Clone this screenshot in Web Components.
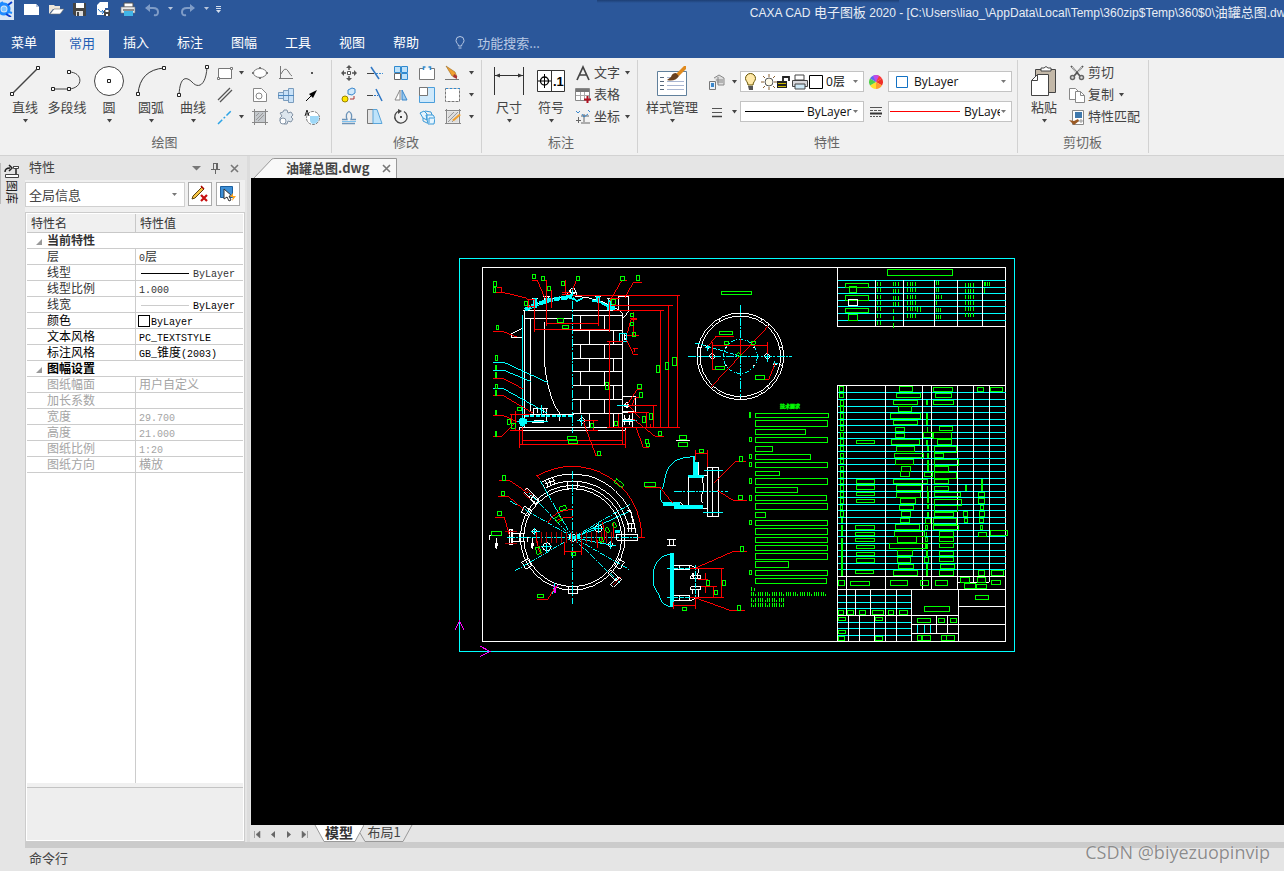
<!DOCTYPE html>
<html lang="zh-CN">
<head>
<meta charset="utf-8">
<title>CAXA CAD 电子图板 2020</title>
<style>
html, body { margin: 0; height: 100%; }
body { font: 13px/16px "Noto Sans CJK SC", "Open Sans", sans-serif; color: #444; background: #e5e5e5; overflow: hidden; }
</style>
</head>
<body>
<cad-app></cad-app>
<script>
const define = (name, html, setup) => {
  const tpl = document.createElement('template');
  tpl.innerHTML = html;
  customElements.define(name, class extends HTMLElement {
    connectedCallback() {
      if (this.shadowRoot) return;
      const root = this.attachShadow({ mode: 'open' });
      root.append(tpl.content.cloneNode(true));
      if (setup) setup(this, root);
    }
  });
};

/* ---------- icons: [width, height, markup] ---------- */
const node = (x, y) => `<path d="M${x - 1.5} ${y - 1.5}h3v3h-3z" fill="#fff" stroke="#222"/>`;
const ICONS = {
  caret: [7, 4, '<path d="M1 0h5L3.500 3.500z" fill="#444"/>'],
  caretGray: [7, 4, '<path d="M1 0h5L3.500 3z" fill="#777"/>'],
  caretLight: [7, 4, '<path d="M1 0h5L3.500 3z" fill="#b9c6dc"/>'],
  logo: [14, 16, '<circle cx="4" cy="8" r="5" fill="none" stroke="#1f8bff" stroke-width="3"/><path d="M6 13l5 3M8 4l4-3" stroke="#0a3fd0" stroke-width="2"/><path d="M0 3l3-2M9 11l3 1" stroke="#1f8bff" stroke-width="2"/><circle cx="4" cy="8" r="2.500" fill="#7cc4ff"/>'],
  newDoc: [16, 16, '<path d="M0 3h12l3 3v8H0z" fill="#fff"/><path d="M12 3v3h3z" fill="#b9c6dc"/>'],
  open: [16, 16, '<path d="M1 13V4h5l1 1h5v3H5z" fill="#ede6da"/><path d="M2 13l4-5h10l-4 5z" fill="#fff" stroke="#6c6c6c" stroke-width=".6"/>'],
  save: [16, 16, '<path d="M1 2h13v13H3l-2-2z" fill="#444"/><path d="M4 2h8v5H4z" fill="#fff"/><path d="M4 10h7v5H4z" fill="#ddd"/><path d="M5 11h2v4H5z" fill="#444"/>'],
  saveAs: [16, 16, '<path d="M4 1h8v6H9v7H1V4z" fill="#fff"/><path d="M2 8q2 4 6 3M6 9l2 2-2 2" fill="none" stroke="#2b77c8"/><path d="M8 9h6v6H8z" fill="#444"/><path d="M9.500 9h3v2h-3zM10 13h2v2h-2z" fill="#fff"/>'],
  print: [16, 16, '<path d="M4 2h9v4H4z" fill="#fff" stroke="#555"/><path d="M1 6h14v6H1z" fill="#e8e8e8" stroke="#777" stroke-width=".6"/><path d="M4 10h9v5H4z" fill="#41b5e8"/><path d="M3 9h11" stroke="#333"/>'],
  undo: [16, 16, '<path d="M2 7h7q5 0 5 4t-4 3" fill="none" stroke="#7f9cc7" stroke-width="2"/><path d="M1 7l5-4v8z" fill="#7f9cc7"/>'],
  redo: [16, 16, '<path d="M14 7H7q-5 0-5 4t4 3" fill="none" stroke="#7f9cc7" stroke-width="2"/><path d="M15 7l-5-4v8z" fill="#7f9cc7"/>'],
  more: [7, 8, '<path d="M1 1.500h5M1 3.500h5" stroke="#d5dfee"/><path d="M1 5h5L3.500 8z" fill="#d5dfee"/>'],
  bulbOff: [10, 14, '<path d="M3.500 10C3.500 8 1 7 1 4.500a4 4 0 0 1 8 0C9 7 6.500 8 6.500 10zM3.500 12h3" fill="none" stroke="#b9c9e4"/>'],
  line: [32, 32, '<path d="M3 29L29 3" stroke="#444" stroke-width="1.500"/>' + node(3, 29) + node(29, 3)],
  poly: [32, 32, '<path d="M2 24H18C33 23 32 7 18 7" fill="none" stroke="#444"/>' + node(2, 24) + node(18, 24) + node(18, 7)],
  circle: [32, 32, '<circle cx="16" cy="16" r="14.500" fill="#fff" stroke="#444"/>' + node(16, 16)],
  arc: [32, 32, '<path d="M3 29Q5 5 29 3" fill="none" stroke="#333"/>' + node(3, 29) + node(29, 3)],
  curve: [32, 32, '<path d="M2 30C3 10 10 12 15 17C21 24 29 21 30 2" fill="none" stroke="#444"/>' + node(2, 30) + node(30, 2)],
  rect: [16, 16, '<path d="M1.500 3.500h13v10h-13z" fill="#fff" stroke="#777"/><path d="M.5 12.500h2v2h-2zM13.500 2.500h2v2h-2z" fill="#fff" stroke="#777"/>'],
  ellipse: [16, 16, '<ellipse cx="8" cy="8" rx="6.500" ry="4.500" fill="#fff" stroke="#777"/><path d="M0 7h2v2H0zM14 7h2v2h-2zM7 2h2v2H7zM7 12h2v2H7z" fill="#777"/>'],
  graph: [16, 16, '<path d="M2.500 1v13M1 13.500h14M3 9Q7 1 10 6T14 11" fill="none" stroke="#777"/>'],
  point: [16, 16, '<path d="M7 7h2v2H7z" fill="#555"/>'],
  parallel: [16, 16, '<path d="M1 13L13 1M3 15L15 3" stroke="#555" stroke-width="1.300"/>'],
  contour: [16, 16, '<path d="M1.500 1.500h8l5 5v8h-13z" fill="#fff" stroke="#888"/><circle cx="7" cy="9" r="3" fill="none" stroke="#888"/>'],
  shaft: [16, 16, '<path d="M.5 5.500h5v6h-5zM5.500 3.500h5v10h-5zM10.500 1.500h5v14h-5z" fill="#c9e2f8" stroke="#7a9cbd"/><path d="M0 8.500h16" stroke="#4b87c0"/>'],
  arrow: [16, 16, '<path d="M2 14l7-7" stroke="#000"/><path d="M13 3L5 7l4 4z" fill="#000"/>'],
  center: [16, 16, '<path d="M1 15L15 1" stroke="#2ca3e6" stroke-width="1.500" stroke-dasharray="6 2 2 2"/>'],
  hatch: [16, 16, '<path d="M3 3h10v10H3z" fill="#c4c8cc"/><path d="M2.500 0v16M13.500 0v16M0 2.500h16M0 13.500h16" stroke="#888"/><path d="M4 7l3-3M4 11l7-7M6 12l6-6" stroke="#999"/>'],
  gear: [16, 16, '<path d="M6 1h3l1 3 3-1 2 3-2 2 2 2-2 3-3-1-1 3H6v-3H2V9l2-2-2-3 3-1z" fill="#dde6ee" stroke="#8494a6"/><circle cx="5" cy="12" r="3" fill="#fff" stroke="#8494a6"/>'],
  textCircle: [16, 16, '<circle cx="9" cy="9" r="6.500" fill="#fff" stroke="#777" stroke-dasharray="3 1"/><path d="M6 7h9q0 8-6 8q-3-1-3-4z" fill="#9fd8f7"/><path d="M1 7l2-6 2 6M2 5h3" fill="none" stroke="#222"/>'],
  move: [16, 16, '<path d="M8 2v3M8 11v3M2 8h3M11 8h3" stroke="#555" stroke-width="1.500"/><path d="M8 0l3 3H5zM8 16l3-3H5zM0 8l3-3v6zM16 8l-3-3v6z" fill="#555"/><path d="M6.500 6.500h3v3h-3z" fill="#fff" stroke="#555"/>'],
  trim: [16, 16, '<path d="M0 8.500h7" stroke="#444"/><path d="M9 8.500h7" stroke="#3f8fd4" stroke-dasharray="2 1"/><path d="M4 2l8 12" stroke="#2f77c4" stroke-width="1.500"/>'],
  array: [16, 16, '<path d="M1.500 1.500h6v6h-6zM8.500 1.500h6v6h-6zM8.500 8.500h6v6h-6z" fill="#bfe1f8" stroke="#2f8ad0"/><path d="M1.500 8.500h6v6h-6z" fill="#fff" stroke="#666"/>'],
  breakAt: [16, 16, '<path d="M5 3.500H.5v11h15v-11H11" fill="#fff" stroke="#777"/><path d="M4.500 5V2h2M11.500 5V2h-2" fill="none" stroke="#2f8ad0" stroke-width="1.500"/>'],
  erase: [16, 16, '<path d="M1 1l9 6 2 5-5-1z" fill="#f0a030" stroke="#9a6a20" stroke-width=".6"/><path d="M9 9l3 2v3l-4-2z" fill="#a33"/><path d="M0 14.500h14" stroke="#777"/>'],
  copy2: [16, 16, '<circle cx="4" cy="12" r="3" fill="#ffe600" stroke="#998200"/><path d="M7 3l4-2 3 1v4l-3 2-4-1z" fill="#cfe8fb" stroke="#3a87cc"/><path d="M9 12h4V9" fill="none" stroke="#a33"/>'],
  extend: [16, 16, '<path d="M0 8.500h6" stroke="#444"/><path d="M7 8.500h4" stroke="#2f77c4" stroke-dasharray="2 1"/><path d="M9 2l6 12" stroke="#2f77c4" stroke-width="1.500"/>'],
  mirror: [16, 16, '<path d="M7 3v10H2z" fill="#fff" stroke="#888"/><path d="M9 3v10h5z" fill="#9dcbee" stroke="#3a87cc"/>'],
  scale: [16, 16, '<path d="M.5 .5h15v15H.5z" fill="#cfe9fb" stroke="#4a9edb"/><path d="M.5 .5h8v8h-8z" fill="#fff" stroke="#777"/>'],
  stretch: [16, 16, '<path d="M.5 1.500h14v13H.5z" fill="#fff" stroke="#777" stroke-dasharray="3 1"/><path d="M1 1.500h14" stroke="#2f8ad0" stroke-dasharray="2 2"/>'],
  offset: [16, 16, '<path d="M1 10.500h5q-2-6 2-8q4 2 2 8h5M1 14.500h13" fill="none" stroke="#6b93b8" stroke-width="1.300"/><path d="M1 12.500h14" stroke="#7cc0ee"/>'],
  shear: [16, 16, '<path d="M.5 .5h9v14h-9z" fill="#e4e4e4" stroke="#777"/><path d="M6 .5h4l5 14H6z" fill="#bfe3fa" stroke="#5aa5da"/>'],
  rotate: [16, 16, '<path d="M11 2.500A6.200 6.200 0 1 1 6 2" fill="none" stroke="#444" stroke-width="1.300"/><path d="M5 0l4 2-4 3z" fill="#444"/><path d="M7 7h2v2H7z" fill="#444"/>'],
  block: [16, 16, '<path d="M1 4l4-2 3 3v6l-4-2zM7 6h7l2 3-1 6H9z" fill="#e4f4fe" stroke="#3a9ad8"/><path d="M6 2l6 1 1 3M4 9v3l4 2M10 9h5M10 9v5" fill="none" stroke="#3a9ad8"/>'],
  editHatch: [16, 16, '<path d="M2.500 2.500h11v11h-11z" fill="#ddd"/><path d="M1.500 0v15M14.500 0v15M0 1.500h16M0 14.500h16" stroke="#888"/><path d="M3 9l6-6M3 13L13 3M7 13l6-6" stroke="#999"/><path d="M7 11l7-6 2 1-7 6z" fill="#f0a030"/>'],
  dim: [32, 32, '<path d="M1.500 2v28M30.500 2v28M2 10.500h28" stroke="#333"/><path d="M2 10.500l5-2v4zM30 10.500l-5-2v4z" fill="#333"/>'],
  sym: [32, 32, '<path d="M2.500 5.500h27v21h-27zM16.500 5v21" fill="#fff" stroke="#333"/><circle cx="9.500" cy="16" r="4" fill="none" stroke="#000" stroke-width="1.300"/><path d="M3 16h13M9.500 9v14" stroke="#000"/><text x="18" y="21" font-family="Liberation Sans, sans-serif" font-size="13" font-weight="700" fill="#000">.1</text>'],
  textA: [16, 16, '<path d="M2 15L8 2l6 13M4 10h8" fill="none" stroke="#444" stroke-width="1.700"/>'],
  tableAdd: [16, 16, '<path d="M.5 1.500h14v12H.5z" fill="#fff" stroke="#888"/><path d="M1 2h13v3H1z" fill="#777"/><path d="M1 8.500h13M5.500 5v8M9.500 5v8" stroke="#aaa"/><path d="M12.500 9v7M9 12.500h7" stroke="#b01020" stroke-width="2"/>'],
  coord: [16, 16, '<path d="M3.500 8v6M1 11.500h5M9 5v8M6 7h8M6 14h9" stroke="#666"/><path d="M1 2l2 2 2-2M7 5l2 3 4-3M13 1l2 2" fill="none" stroke="#3a87cc"/>'],
  style: [32, 32, '<path d="M1.500 6.500h29v24h-29z" fill="#fff" stroke="#60809c"/><path d="M4 12.500h4M4 16.500h4M4 20.500h4M4 24.500h4" stroke="#56687c"/><path d="M11 12.500h8M11 16.500h17M11 20.500h17M11 24.500h17" stroke="#a9b6d2"/><path d="M20 9l8-8h2v3l-7 7z" fill="#e08a1e"/><path d="M23 11l-3-3q-4 0-5 4l-4 3q8 2 12-4z" fill="#6b4220"/>'],
  layers: [16, 16, '<path d="M5 4l5-3 5 3v7H9" fill="#ddd" stroke="#888"/><path d="M7 6h7M8 8h6M9 3v8" stroke="#888"/><path d="M.5 7.500h6v8h-6z" fill="#eaf2fa" stroke="#777"/><path d="M2 9h3v4H2z" fill="#3a87cc"/>'],
  widths: [16, 16, '<path d="M3 4.500h10M3 8.500h10" stroke="#555"/><path d="M3 12.500h10" stroke="#444" stroke-width="1.500"/>'],
  bulb: [14, 18, '<path d="M4 12C4 9 1.500 8 1.500 5.500a5 5 0 0 1 10 0C11.500 8 9 9 9 12z" fill="#ffe9a8" stroke="#665200"/><path d="M4 13h5v4H5z" fill="#555"/>'],
  sun: [16, 16, '<circle cx="8" cy="8" r="4" fill="#fffbe8" stroke="#555"/><path d="M8 0v3M8 13v3M0 8h3M13 8h3M2 2l2 2M12 12l2 2M14 2l-2 2M4 12l-2 2" stroke="#8a6030"/>'],
  lock: [14, 16, '<path d="M0 7h10v7H0z" fill="#222"/><path d="M1 9.500h8M1 12.500h8" stroke="#c9b800"/><path d="M6 7V3h6v4" fill="none" stroke="#222" stroke-width="1.800"/>'],
  printer: [18, 18, '<path d="M4 2h9v5H4z" fill="#fff" stroke="#444"/><path d="M1.500 7.500h15v6h-15z" fill="#d8d8dc" stroke="#444"/><path d="M4 11h10v5H4z" fill="#cde7f5" stroke="#444"/>'],
  swatch: [14, 14, '<path d="M.5 .5h13v13H.5z" fill="#fff" stroke="#000"/>'],
  swatchBlue: [14, 14, '<path d="M1.500 1.500h11v11h-11z" fill="#fff" stroke="#1372c4"/>'],
  wheel: [14, 14, '<path d="M7 7L7 0a7 7 0 0 1 6 3.500z" fill="#ff3b3b"/><path d="M7 7l6-3.500a7 7 0 0 1 0 7z" fill="#f03028"/><path d="M7 7l6 3.500A7 7 0 0 1 7 14z" fill="#ff9d2e"/><path d="M7 7v7a7 7 0 0 1-6-3.500z" fill="#ffe02e"/><path d="M7 7l-6 3.500a7 7 0 0 1 0-7z" fill="#4fd04a"/><path d="M7 7L1 3.500A7 7 0 0 1 7 0z" fill="#5a6cf0"/><path d="M7 7L4 1q3-2 6 0z" fill="#c24be8"/>'],
  ltypes: [14, 12, '<path d="M1 1.500h12" stroke="#555"/><path d="M1 4.500h12" stroke="#555" stroke-dasharray="3 1"/><path d="M1 7.500h12" stroke="#333" stroke-width="2"/><path d="M1 10.500h12" stroke="#555" stroke-dasharray="2 1"/>'],
  paste: [32, 32, '<path d="M7.500 4.500h20v23h-20z" fill="#c3b8a8" stroke="#444"/><path d="M13 5V3h3q2-3 4 0h3v3H13z" fill="#fff" stroke="#444"/><path d="M9.500 9.500h11v21h-17v-15z" fill="#fff" stroke="#444"/><path d="M9.500 9.500v6h-6" fill="none" stroke="#444"/>'],
  cut: [16, 16, '<path d="M2 1l9 10M14 1L5 11" stroke="#555" stroke-width="1.800"/><path d="M3 2l4 5M13 2L9 7" stroke="#fff" stroke-width=".8"/><circle cx="3.500" cy="12.500" r="2" fill="#ddd" stroke="#666" stroke-width="1.500"/><circle cx="12.500" cy="12.500" r="2" fill="#ddd" stroke="#666" stroke-width="1.500"/>'],
  copy: [16, 16, '<path d="M.5 1.500h6l3 3v8h-9z" fill="#fff" stroke="#888"/><path d="M6.500 4.500h5l4 4v7h-9z" fill="#fff" stroke="#888"/><path d="M11.500 4.500v4h4" fill="none" stroke="#888"/>'],
  match: [16, 16, '<path d="M3.500 1.500h11v14h-11z" fill="#fff" stroke="#888"/><path d="M6 3h7v6H6z" fill="#3f79ad"/><path d="M9 12h5M12 10v4" stroke="#999"/><path d="M0 11l5 1 4-2 1 2-5 4z" fill="#9a5a24"/>'],
  menuDown: [10, 5, '<path d="M0 0h9L4.500 4.500z" fill="#777"/>'],
  pin: [9, 12, '<path d="M2.500 1v6M6.500 1v6M5.500 1v6M2 1.500h5M0 7.500h9M4.500 8v4" stroke="#666"/>'],
  close: [9, 9, '<path d="M1 1l7 7M8 1L1 8" stroke="#777" stroke-width="1.600"/>'],
  pencilX: [18, 18, '<path d="M2 11L11 2l2 2-9 9-3 1z" fill="#f6c544" stroke="#5a4210"/><path d="M10 1l3 3" stroke="#a00" stroke-width="1.500"/><path d="M10 10l6 6M16 10l-6 6" stroke="#c80f0f" stroke-width="2.200"/>'],
  pick: [18, 18, '<path d="M1.500 1.500h12v11h-12z" fill="#3d8fd6" stroke="#1b5f9f"/><path d="M5 4v10l3-2 2 4 2-1-2-4h3z" fill="#fff" stroke="#333"/><path d="M14 8l-3 4h3l-1 4 4-5h-3z" fill="#ffa51e"/>'],
  lib: [16, 16, '<path d="M1 9q0-4 5-4M5 2l3 3-3 3M9 4h6M12 4v8" fill="none" stroke="#222" stroke-width="1.500"/><path d="M9.500 3.500h5v2h-5z" fill="#fff" stroke="#444"/><path d="M1.500 11.500h13v3h-13z" fill="#fff" stroke="#444"/>'],
  triangle: [6, 6, '<path d="M6 0v6H0z" fill="#999"/>'],
  first: [8, 8, '<path d="M1.500 1v7M7 1v7L3 4.500z" fill="#666" stroke="#777" stroke-width=".6"/>'],
  prev: [8, 8, '<path d="M6 1v7L2 4.500z" fill="#666"/>'],
  next: [8, 8, '<path d="M2 1v7l4-3.500z" fill="#666"/>'],
  last: [8, 8, '<path d="M6.500 1v7M1 1v7l4-3.500z" fill="#666" stroke="#777" stroke-width=".6"/>']
};
define('cad-icon', '<style>:host{display:inline-flex;flex:none}svg{display:block}</style>', (el, root) => {
  const [w, h, body] = ICONS[el.getAttribute('name')];
  root.innerHTML += `<svg width="${w}" height="${h}" viewBox="0 0 ${w} ${h}" fill="none" aria-hidden="true">${body}</svg>`;
});

/* ---------- controls ---------- */
const RESET = 'button{all:unset;box-sizing:border-box;cursor:default;display:flex}button:hover{background:#d9e6f5}';
define('tool-button', `<style>:host{display:flex}${RESET}button{flex:1;align-items:center;justify-content:center;height:22px}</style><button></button>`, (el, root) => {
  const b = root.querySelector('button');
  b.setAttribute('aria-label', el.getAttribute('label') || el.getAttribute('icon'));
  b.innerHTML = `<cad-icon name="${el.getAttribute('icon')}"></cad-icon>`;
});
define('big-button', `<style>:host{display:block}${RESET}button{width:100%;flex-direction:column;align-items:center;white-space:nowrap}
span{margin:2px 0 4px;line-height:16px}</style><button></button>`, (el, root) => {
  root.querySelector('button').innerHTML = `<cad-icon name="${el.getAttribute('icon')}"></cad-icon><span>${el.getAttribute('label')}</span>` +
    (el.hasAttribute('plain') ? '' : '<cad-icon name="caret"></cad-icon>');
});
define('row-button', `<style>:host{display:block}${RESET}button{height:22px;padding:0 3px;gap:3px;align-items:center;white-space:nowrap}span{padding-bottom:2px}.c{margin-left:1px}</style><button></button>`, (el, root) => {
  root.querySelector('button').innerHTML = `<cad-icon name="${el.getAttribute('icon')}"></cad-icon><span>${el.getAttribute('label')}</span>` +
    (el.hasAttribute('menu') ? '<cad-icon class="c" name="caret"></cad-icon>' : '');
});
define('combo-box', `<style>
:host{display:flex;align-items:center;box-sizing:border-box;background:#fff;border:1px solid #c3c3c3;height:21px;padding-right:4px;overflow:hidden}
::slotted(*){flex:none}
select{appearance:none;border:0;background:none;padding:0;margin:0;outline:0;color:var(--combo-ink,#111);font:inherit;line-height:16px;flex:1;min-width:0;height:19px;overflow:hidden}
</style><slot></slot><select><option></option></select><cad-icon name="caretGray"></cad-icon>`, (el, root) => {
  root.querySelector('option').textContent = el.getAttribute('value');
  root.querySelector('select').setAttribute('aria-label', el.getAttribute('label'));
});

/* ---------- title bar and ribbon ---------- */
define('title-bar', `<style>
:host{display:grid;grid-template-columns:58.400% minmax(0,1fr);height:30px;background:#2b579a;color:#e8edf5;position:relative}
:host::before{content:"";position:absolute;left:46.500%;width:23.500%;top:0;height:3px;background:linear-gradient(#1d3f74,#2b579a)}
.q{display:flex;align-items:center;height:18px}
.q tool-button{width:24px}.q tool-button.s{width:12px}.q tool-button.first{width:12px;margin-right:8px}
h1{font:12px/16px "Liberation Sans",sans-serif;margin:4px 0 0;white-space:nowrap}
h1 span{font:13px/16px "Noto Sans CJK SC",sans-serif}
</style><div class="q"><tool-button class="first" icon="logo" label="CAXA"></tool-button><tool-button icon="newDoc" label="新建"></tool-button><tool-button icon="open" label="打开"></tool-button><tool-button icon="save" label="保存"></tool-button><tool-button icon="saveAs" label="另存为"></tool-button><tool-button icon="print" label="打印"></tool-button><tool-button icon="undo" label="撤销"></tool-button><tool-button class="s" icon="caretLight" label="撤销列表"></tool-button><tool-button icon="redo" label="重做"></tool-button><tool-button class="s" icon="caretLight" label="重做列表"></tool-button><tool-button class="s" icon="more" label="自定义"></tool-button></div>
<h1>CAXA CAD <span>电子图板</span> 2020 - [C:\\Users\\liao_\\AppData\\Local\\Temp\\360zip$Temp\\360$0\\<span>油罐总图</span>.dw</h1>`);
define('ribbon-tabs', `<style>
:host{display:flex;height:28px;background:#2b579a;color:#fff}
${RESET}button{padding:0 14px 3px;align-items:center;height:27px}
button:first-of-type{padding:0 18px 3px 11px}
button.on{background:#f1f1f1;color:#1f5fb5;height:28px;padding-bottom:4px;border-top:1px solid #fff}
button:not(.on):hover{background:#3d69ac}
label{display:flex;align-items:center;gap:12px;margin-left:22px;padding-bottom:2px}
input{all:unset;font:inherit;width:120px;color:#fff}input::placeholder{color:#b9c9e4;opacity:1}
</style><button>菜单</button><button class="on">常用</button><button>插入</button><button>标注</button><button>图幅</button><button>工具</button><button>视图</button><button>帮助</button>
<label><cad-icon name="bulbOff"></cad-icon><input aria-label="功能搜索" placeholder="功能搜索..."></label>`);
define('ribbon-group', `<style>
:host{display:flex;flex-direction:column;box-sizing:border-box;margin:2px 0;height:93px;border-right:1px solid #d2d2d2}
.b{display:flex;height:74px;box-sizing:border-box}
.l{text-align:center;color:#666}
</style><div class="b"><slot></slot></div><div class="l"></div>`, (el, root) => { root.querySelector('.l').textContent = el.getAttribute('label'); });
define('ribbon-bar', `<style>
:host{display:flex;background:#f1f1f1;border-bottom:1px solid #d2d2d2}
.tools,.rows{display:grid;grid-auto-rows:22px;padding-top:2px;align-content:start}
big-button{width:42px;padding-top:5px}
.draw{grid-template-columns:22px 11px 26px 26px 26px}
.edit{grid-template-columns:repeat(5,26px) 10px}
.props{display:grid;grid-template-columns:22px 12px 124px 24px 124px;grid-auto-rows:21px;row-gap:9px;padding:11px 0 0 4px;align-content:start}
.props tool-button{align-items:center}
.props combo-box{font:12px/16px "Open Sans","Noto Sans CJK SC",sans-serif}
.gap{width:3px}.k{width:59px;height:1px;background:#000;margin:0 3px 0 4px}.r{width:70px;height:1px;background:#f00;margin:0 4px 0 1px}
</style>
<ribbon-group label="绘图" style="padding:0 6px 0 4px">
<big-button icon="line" label="直线"></big-button><big-button icon="poly" label="多段线" plain></big-button><big-button icon="circle" label="圆"></big-button><big-button icon="arc" label="圆弧"></big-button><big-button icon="curve" label="曲线"></big-button>
<div class="tools draw"><tool-button icon="rect"></tool-button><tool-button icon="caret"></tool-button><tool-button icon="ellipse"></tool-button><tool-button icon="graph"></tool-button><tool-button icon="point"></tool-button>
<tool-button icon="parallel"></tool-button><span></span><tool-button icon="contour"></tool-button><tool-button icon="shaft"></tool-button><tool-button icon="arrow"></tool-button>
<tool-button icon="center"></tool-button><tool-button icon="caret"></tool-button><tool-button icon="hatch"></tool-button><tool-button icon="gear"></tool-button><tool-button icon="textCircle"></tool-button></div>
</ribbon-group>
<ribbon-group label="修改" style="padding:0 5px 0 4px"><div class="tools edit">
<tool-button icon="move"></tool-button><tool-button icon="trim"></tool-button><tool-button icon="array"></tool-button><tool-button icon="breakAt"></tool-button><tool-button icon="erase"></tool-button><tool-button icon="caret"></tool-button>
<tool-button icon="copy2"></tool-button><tool-button icon="extend"></tool-button><tool-button icon="mirror"></tool-button><tool-button icon="scale"></tool-button><tool-button icon="stretch"></tool-button><tool-button icon="caret"></tool-button>
<tool-button icon="offset"></tool-button><tool-button icon="shear"></tool-button><tool-button icon="rotate"></tool-button><tool-button icon="block"></tool-button><tool-button icon="editHatch"></tool-button><tool-button icon="caret"></tool-button>
</div></ribbon-group>
<ribbon-group label="标注" style="padding:0 3px 0 6px"><big-button icon="dim" label="尺寸"></big-button><big-button icon="sym" label="符号"></big-button>
<div class="rows"><row-button icon="textA" label="文字" menu></row-button><row-button icon="tableAdd" label="表格"></row-button><row-button icon="coord" label="坐标" menu></row-button></div></ribbon-group>
<ribbon-group label="特性" style="padding:0 5px 0 4px"><big-button icon="style" label="样式管理" style="width:60px"></big-button>
<div class="props"><tool-button icon="layers"></tool-button><tool-button icon="caret"></tool-button>
<combo-box value="0层" label="图层"><span class="gap"></span><cad-icon name="bulb"></cad-icon><span class="gap"></span><cad-icon name="sun"></cad-icon><cad-icon name="lock"></cad-icon><cad-icon name="printer"></cad-icon><cad-icon name="swatch"></cad-icon><span class="gap"></span></combo-box>
<tool-button icon="wheel"></tool-button><combo-box value="ByLayer" label="颜色"><span style="width:6px"></span><cad-icon name="swatchBlue"></cad-icon><span style="width:5px"></span></combo-box>
<tool-button icon="widths"></tool-button><tool-button icon="caret"></tool-button><combo-box value="ByLayer" label="线型"><span class="k"></span></combo-box>
<tool-button icon="ltypes"></tool-button><combo-box value="ByLayer" label="线宽"><span class="r"></span></combo-box></div></ribbon-group>
<ribbon-group label="剪切板" style="padding:0 5px 0 4px"><big-button icon="paste" label="粘贴" style="width:44px"></big-button>
<div class="rows"><row-button icon="cut" label="剪切"></row-button><row-button icon="copy" label="复制" menu></row-button><row-button icon="match" label="特性匹配"></row-button></div></ribbon-group>`);

/* ---------- property palette ---------- */
const ROWS = [
  ['当前特性'], ['层', '<b>0</b>层'], ['线型', '<i></i><b>ByLayer</b>'], ['线型比例', '<b>1.000</b>'], ['线宽', '<i class="g"></i><b>ByLayer</b>', 'v'],
  ['颜色', '<u></u><b>ByLayer</b>', 'k'], ['文本风格', '<b>PC_TEXTSTYLE</b>', 'k'], ['标注风格', '<b>GB_</b>锥度<b>(2003)</b>', 'k'],
  ['图幅设置', null, 'k'], ['图纸幅面', '用户自定义', 'd'], ['加长系数', '', 'd'], ['宽度', '<b>29.700</b>', 'd'], ['高度', '<b>21.000</b>', 'd'],
  ['图纸比例', '<b>1:20</b>', 'd'], ['图纸方向', '横放', 'd']];
define('property-panel', `<style>
:host{display:flex;flex-direction:column;width:220px;background:#f0f0f0}
header{display:flex;align-items:center;height:24px;background:#e5e5e5;padding:0 1px 0 4px;box-sizing:border-box}
h2{font:inherit;margin:0;flex:1;padding-bottom:2px}
header tool-button{width:19px}
.sel{display:flex;gap:3px;padding:2px 5px 5px 0;align-items:start}
.sel combo-box{flex:1;height:25px;border-color:#d0d0d0;padding-left:3px;padding-right:6px;--combo-ink:#444}
.sel tool-button{background:#fff;border:1px solid #aaa}
.sel .x{margin-right:1px}
.box{flex:1;display:flex;flex-direction:column;border:1px solid #ccc;box-shadow:inset 0 0 0 1px #fff;padding:1px;min-height:0}
table{border-collapse:separate;border-spacing:0;table-layout:fixed;width:100%;font:12px/14px "Noto Sans CJK SC",sans-serif;color:#333;background:#fff}
th{font-weight:400;text-align:left;background:#f0f0f0;height:19px;padding:0 0 0 4px;border-bottom:1px solid #c8c8c8;box-sizing:border-box}
th:first-child{width:109px;border-right:1px solid #c8c8c8;box-sizing:border-box}
td{height:16px;box-sizing:border-box;padding:0 0 1px 20px;border-bottom:1px solid #ccc;white-space:nowrap}
td:first-child:not([colspan]){border-right:1px solid #ccc}
td+td{padding:0 0 1px 3px}
b{font:10px/1px "Liberation Mono",monospace}
.h td{font-weight:700;padding-left:9px}.h cad-icon{margin-right:5px}
.k,.v td+td{color:#000}.d{color:#a4a4a4}
i{display:inline-block;width:48px;height:1px;background:#000;margin:0 4px 3px 2px}i.g{background:#ccc}
u{display:inline-block;box-sizing:border-box;width:12px;height:12px;border:1px solid #000;margin:-4px 1px -2px -1px}
.fill{flex:1;background:linear-gradient(#ccc,#ccc) 108px 0/1px 100% no-repeat #fff}
.desc{height:52px;margin-top:4px;border-top:1px solid #c3c3c3;background:#eee}
</style><header><h2>特性</h2><tool-button icon="menuDown" label="菜单"></tool-button><tool-button icon="pin" label="固定"></tool-button><tool-button icon="close" label="关闭"></tool-button></header>
<div class="sel"><combo-box value="全局信息" label="对象"></combo-box><tool-button class="x" icon="pencilX" style="width:22px" label="清除"></tool-button><tool-button icon="pick" style="width:22px" label="选择"></tool-button></div>
<div class="box"><table><thead><tr><th>特性名</th><th>特性值</th></tr></thead><tbody>${ROWS.map(([n, v, c = '']) => v == null
  ? `<tr class="h ${c}"><td colspan="2"><cad-icon name="triangle"></cad-icon>${n}</td></tr>` : `<tr class="${c}"><td>${n}</td><td>${v}</td></tr>`).join('')}</tbody></table><div class="fill"></div><div class="desc"></div></div>`);

/* ---------- drawing ---------- */
const P = (color, d, extra = '') => `<path stroke="${color}" d="${d}" ${extra}/>`;
const W = '#fff', C = '#0ff', R = '#f00', G = '#0f0';
const boxes = s => P(G, s.trim().split(';').map(b => { const [x, y, w, h] = b.trim().split(' '); return `M${x} ${y}h${w}v${h}h-${w}z`; }).join(''));
const fills = s => `<path fill="${G}" stroke="none" d="${s.trim().split(';').map(b => { const [x, y, w, h] = b.trim().split(' '); return `M${x} ${y}h${w}v${h}h-${w}z`; }).join('')}"/>`;
const hl = (ys, a, b) => ys.map(y => `M${a} ${y}H${b}`).join('');
const vl = (xs, a, b) => xs.map(x => `M${x} ${a}V${b}`).join('');
const tilt = (x, y, w, h, a, c = G) => `<rect x="${-w / 2}" y="${-h / 2}" width="${w}" height="${h}" stroke="${c}" transform="translate(${x} ${y}) rotate(${a})"/>`;
const ring = (x, y, r, c = W, e = '') => `<circle cx="${x}" cy="${y}" r="${r}" stroke="${c}" ${e}/>`;
const part = (x, y, s) => `<g transform="translate(${x} ${y}) scale(.333333)">${s}</g>`;
const DD = 'stroke-dasharray="24 4 6 4"';
const brick = [151, 196, 238, 280, 319, 361, 403, 445, 487];

const tank = P(W, 'M133 137H420M133 138V487M133 160H278M151 160V440M428 150V487M118 487H437V496H118ZM127 190L94 207V217H127M194 170V290C196 340 215 420 240 445M415 94H446V138L430 160M415 94V138H446M428 394H466V441H428M428 443H458V487M133 137Q200 96 278 92Q370 100 424 140L428 150M240 440V468M135 448H282M160 430V448M172 430V445M190 430V445M160 430H204M162 466H190V474H155M200 430V470M434 450V480M448 450V480M434 460L448 470M434 470L448 460M434 208V225L442 216ZM430 421L442 412V428ZM130 137H133M263 96V84H290V96M268 84V74M288 84V74')
  + P(W, hl(brick, 278, 428) + brick.slice(0, -1).map((y, i) => vl(i % 2 ? [328, 400] : [302, 373], y, brick[i + 1])).join(''))
  + ring(278, 78, 8) + P(W, 'M297 466L307 456L317 466L307 476Z') + P(W, 'M160 104V124M170 104V124M156 100H174M194 96V110M206 96V110M190 96H210M350 92V110M360 92V110M346 94H364M386 100V130M394 100V130M382 100H400') + P(W, 'M430 466H456M436 421H446', 'stroke-width="9"')
  + P(C, 'M135 134L160 122L200 108L240 100L276 96', 'stroke-width="12" stroke-dasharray="20 3"') + P(C, 'M278 98L290 108L308 100M335 106L362 112L385 125L400 133', 'stroke-width="6"') + P(C, 'M164 100V128M200 98V112M258 92H276M355 92V112M390 104V136M380 128H404', 'stroke-width="12"')
  + P(C, 'M128 150V487M420 205H440V230H420ZM40 292H72L204 353M40 316H72L152 349M40 370H68L200 443M110 470H204M306 450V484M290 466H324M412 421H480M430 466H470M184 420V450M127 450V490')
  + P(C, 'M278 70V505', DD) + P(C, 'M135 452H278', 'stroke-width="6" stroke-dasharray="12 4"') + P(C, 'M116 470H140M128 460V484', 'stroke-width="14"')
  + P(R, 'M40 82H68L142 100M64 82V67H50M157 46H172L194 98M184 46H200V182M215 76V130M257 46V88M246 82H270M246 88H270M40 199H68L110 216M40 340H68L128 371M40 391H68L160 445M40 451H68L112 470M40 514H65L105 475M278 91H600M592 91V487M565 121V487M394 121H579M542 136V487M400 136H552M382 487H600M382 229H428M388 229V487M164 102V202M164 193H389M389 110V202M200 175H356M356 100V182M445 421H530M521 421V487M512 487V478M445 443H508M500 443V487M128 526H428M118 538H437M128 487V540M118 496V548M428 487V540M437 496V548M442 205L452 165H470M450 160H470M460 142V212M440 212H476M440 225L460 268H475M458 250H474M465 250V262M440 420L472 373H487M455 422L466 397H490M434 100L460 52H485M390 108L424 48H440M278 75L288 48H300M310 470L348 572H365M460 462L525 514H552M445 487H468L490 548H508M445 420L480 460M313 467H355M340 467V496M325 496H355M415 447V487M408 100V121M390 100H420M90 448H150M106 439V496M96 448V475M90 496H125M145 102V130M140 103H165M140 124H165')
  + boxes('40 49 10 16;40 67 8 16;157 28 10 12;184 34 10 12;202 64 10 12;244 49 10 12;289 34 10 12;421 34 13 12;469 31 10 15;133 109 10 12;232 160 19 12;247 181 19 10;396 103 10 15;451 145 10 10;451 172 10 10;457 202 10 12;49 181 7 12;46 271 7 16;46 358 7 12;112 427 12 10;82 463 9 15;94 475 12 15;376 352 10 21;529 301 10 21;556 292 10 21;577 277 13 24;472 358 13 12;478 382 10 15;487 454 10 18;508 445 10 18;403 469 10 12;331 475 10 12;262 514 28 10;265 526 28 9;352 559 10 12;535 499 10 12;496 523 10 12;499 535 10 9')
  + fills('46 300 5 16;46 321 5 18;46 375 5 17;46 435 5 15;46 498 5 17');

const spokes = [];
for (let x = 170; x <= 402; x += 15) spokes.push(x);
const plan = ring(278, 233, 157) + ring(278, 233, 147)
  + P(W, 'M184 67A190 190 0 0 1 467 218M199 83A170 170 0 0 1 446 205M262 65H292V85H262ZM265 380H293V400H265ZM88 208H99V253H88ZM94 208V253M99 220H130V245H99M118 220V245M410 223H473V241H410ZM425 223V241M184 67L199 95M440 150L452 155M440 190H466M440 205H466M446 190V215M456 190V215M452 150L458 185M28 241V226H36M49 235V262M142 247V232H150M157 235V262M196 62L204 80M206 57L214 77M218 54L224 72M196 72L226 60')
  + P(W, 'M45 252H53L49 266ZM153 252H161L157 266Z')
  + tilt(138, 153, 22, 20, 30, W) + tilt(140, 312, 20, 24, -30, W) + tilt(418, 312, 20, 24, 30, W) + tilt(146, 100, 14, 28, -45, W) + tilt(165, 119, 20, 16, 45, W) + tilt(400, 346, 34, 14, 45, W) + tilt(408, 366, 12, 34, 45, W) + tilt(160, 118, 30, 14, 45, W)
  + ring(200, 260, 12) + ring(355, 205, 11) + ring(278, 233, 11) + ring(163, 214, 6) + ring(391, 254, 7)
  + P(C, 'M278 33V432M80 233H475', DD) + P(C, 'M90 123L450 330M106 332L450 133M278 233L180 62M278 233L424 373M278 233L146 98', 'stroke-dasharray="16 3 4 3"')
  + P(C, 'M278 233L446 155M278 233L408 258M278 233L355 205M184 260H216M200 244V276M340 205H372M355 190V220M152 214H180M163 204V226M391 244V268M225 370L218 402')
  + P(C, 'M270 233H300M406 215H420', 'stroke-width="9"')
  + P('#b00000', vl(spokes, 217, 248) + 'M75 215H112M75 250H112M136 84L160 108M398 376L424 350M130 100L150 118')
  + P(R, 'M172 48A207 207 0 0 1 484 233M168 44L180 56M474 233H495M253 245V284M304 245V284M253 274H304M203 190Q222 150 278 148M230 183Q248 170 278 171M170 215Q168 260 185 285M366 185Q378 220 370 250M400 185L402 235M58 61H88L145 100M55 109H85L133 150M46 172H73L88 225M172 418H203L228 378M352 240V263')
  + P('#f0f', 'M220 376L228 398M232 376L222 398')
  + boxes('67 46 10 15;64 94 10 12;52 154 13 12;34 214 31 12;172 403 19 10;274 277 13 9')
  + tilt(417, 70, 28, 12, 37) + tilt(249, 144, 20, 12, -20) + tilt(235, 177, 16, 16, -35) + tilt(175, 272, 20, 13, 75) + tilt(382, 210, 15, 9, 60) + tilt(403, 195, 15, 9, 60) + tilt(364, 240, 13, 9, 70);

const topView = ring(301, 229, 130) + ring(301, 229, 121) + ring(301, 229, 51, C, 'stroke-dasharray="14 4 4 4"')
  + P(W, [0, 12, 48, 60, 90, 120, 132, 168, 180, 192, 228, 240, 270, 300, 312, 348].map(a => { const k = a * Math.PI / 180, c = Math.cos(k), s = Math.sin(k); return `M${(301 + 121 * c).toFixed(0)} ${(229 + 121 * s).toFixed(0)}L${(301 + 130 * c).toFixed(0)} ${(229 + 130 * s).toFixed(0)}`; }).join('') + 'M207 229L217 219L227 229L217 239ZM372 229L382 219L392 229L382 239ZM340 202H346M340 256H346M256 202H262M256 256H262M196 196L208 208M400 254H412')
  + P(C, 'M301 75V352', DD) + P(C, 'M144 229H456', DD) + P(C, 'M165 192H180L301 229', 'stroke-dasharray="14 4"') + P(C, 'M217 212V246M382 212V246M196 202H210M203 196V212M398 250H414M405 242V262')
  + P(R, 'M385 138L212 322M217 196H382M217 186V270H254M382 186V222M205 198L228 169H281M405 250L386 300H347M301 178V229')
  + P(W, 'M108 481H150')
  + boxes('244 34 91 10;238 154 40 10;253 184 13 9;334 184 12 9;226 259 28 10;346 286 28 13;118 466 22 14;115 487 28 12;346 400 220 13;346 421 217 18;346 448 151 15;346 472 217 15;346 499 52 15;346 523 166 15;328 472 7 12;328 523 7 12')
  + fills('327 396 6 17') + tilt(296, 223, 12, 12, -45)
  + `<text x="420" y="383" font-size="15" font-family="Noto Sans CJK SC, sans-serif" fill="${G}" stroke="${G}" stroke-width="1" font-weight="700">技术要求</text>`;

let ticks = '';
for (let i = 0; i < 33; i++) ticks += `M${334 + i * 7} ${i % 6 == 2 ? 462 : 456}V468`;
for (let i = 0; i < 15; i++) ticks += `M${334 + i * 7} ${i % 5 == 1 ? 480 : 474}V486M${334 + i * 7} ${i % 6 == 1 ? 495 : 489}V501`;
const details = P(C, 'M163 50C115 52 96 65 85 85C70 115 76 140 62 150V175C64 186 68 188 72 192')
  + `<path fill="${C}" stroke="none" d="M160 48h6v18h10v40h-16zM145 105h46v9h-46zM69 186h51v12h-51zM102 195h86v12h-86zM90 339h12v161h-12z"/>`
  + P(W, 'M145 112V195M176 66V106M191 107H202M188 205H202M188 112V125L191 135V150L184 165V180L188 190M202 82H236V230H202ZM217 82V230M81 298H108M81 316H108M88 298V316M100 298V316M102 377H155L175 388V398M102 390H150M118 377V390M150 377V390M102 466H150M102 481H155L175 470V460M118 466V481M150 466V481M158 398V410M153 408H182V416H153ZM153 441H182V449H153ZM158 449V462M175 449V460M162 398V415M174 398V415M120 187L128 194')
  + P(C, 'M102 154H264', DD) + P(C, 'M192 91H249M189 217H249M90 343C55 347 42 375 40 400V430C45 452 55 455 60 475C68 492 78 498 90 499') + P(C, 'M82 385H170M82 472H170M167 376V482', 'stroke-dasharray="14 4"')
  + P(R, 'M166 30V60M202 30V82M166 40H202M14 142H60L98 190M222 130L285 65H318M232 152L280 181H320M150 385H251M150 472H251M244 385V472M175 418H204M196 400V418M182 439H231M221 439V472M196 439V458M165 385L280 334H320M165 473L270 511H315M101 485V507M166 475V507M101 498H166')
  + boxes('178 28 12 10;298 49 10 15;13 127 34 12;295 166 13 12;301 319 10 15;199 421 10 15;247 421 10 15;223 451 10 12;292 496 10 15;127 502 13 10;346 67 217 15;346 94 73 12;346 115 217 18;346 142 127 15;346 166 214 15;346 190 217 18;346 217 31 15;346 241 217 15;346 265 217 18;346 292 217 15;346 316 217 15;346 340 217 18;346 364 100 18;346 391 217 15;346 415 214 15;328 67 7 12;328 115 7 15;328 166 7 15;328 241 7 12;328 391 7 12')
  + P(G, ticks + 'M334 441V454M343 445V454');

const grp = (xs, rows) => rows.map(y => vl(xs, y, y + 12)).join('');
const upper = P(C, hl([61, 82, 100, 121, 139, 160, 181], 22, 527) + hl([397, 418, 439, 457, 478, 496, 517, 535, 556, 574, 595], 22, 527))
  + P(W, 'M22 22V199H527M22 376H527M22 376V600' + vl([136, 220, 313, 382, 457], 61, 199) + vl([49, 166, 277, 304, 382, 430, 478], 376, 602))
  + P(G, grp([142, 151], [67, 85, 105, 124, 142, 162, 182]) + grp([190, 196, 205], [67, 87, 109, 127]) + 'M191 147V160M191 168V180M191 189V203' + grp([232, 241, 247, 256], [67, 85, 105, 124, 142, 162]) + 'M262 142V156M271 142V156' + grp([319, 325], [64, 84]) + grp([319, 325, 334], [106]) + 'M319 124V136' + grp([319, 325, 331], [145, 166]) + grp([406, 415, 421, 430], [69, 87, 106, 124, 141, 159]) + 'M463 66V78M466 66V78M472 66V78M478 66V78M463 85V98')
  + boxes('172 28 196 19;46 70 70 13;58 79 22 19;46 106 70 16;46 145 70 13;55 163 28 19;28 379 13 16;28 400 13 13;31 421 10 16;31 439 10 15;31 460 10 15;31 481 10 13;31 499 10 13;31 519 10 13;31 538 10 15;31 559 10 13;31 580 10 13;208 379 40 16;199 400 73 13;190 421 73 13;205 439 40 16;181 460 91 16;190 481 73 13;196 502 28 13;196 520 28 13;184 538 85 16;199 559 55 15;193 580 88 13;310 382 58 13;316 400 49 13;310 421 61 13;328 499 40 13;280 517 28 16;310 517 55 18;322 538 43 16;313 559 67 18;313 580 28 13;79 541 55 10;442 382 19 13;481 382 37 13')
  + fills('288 420 6 15;288 459 6 36;291 501 3 16;288 540 6 15;291 558 6 16;291 579 6 15') + P(W, 'M55 118h28v19h-28z');
const lower = P(C, hl([25, 43, 64, 85, 103, 124, 142, 163, 181, 202, 220, 241, 259, 280, 301, 319, 340, 358], 22, 527) + hl([436, 457, 475, 517, 535, 556], 22, 244) + vl([262, 283, 301], 523, 550))
  + P(W, 'M22 0V574' + vl([49, 166, 277, 304, 382], 30, 418) + vl([430, 478], 30, 397) + vl([49, 76, 121, 166, 199], 418, 496) + vl([55, 88, 133, 166, 199], 496, 574) + vl([244, 385], 418, 574) + vl([319, 352], 496, 550) + 'M22 379H527M382 397H478M22 418H527M22 496H385M385 469H527M244 523H527M244 550H385')
  + boxes('31 10 10 13;31 28 10 13;31 49 10 13;31 67 10 16;31 88 10 13;31 106 10 15;31 127 10 13;31 145 10 16;31 166 7 13;31 184 10 16;196 28 55 15;214 49 28 15;211 65 28 15;190 88 103 13;199 106 76 16;199 127 73 16;211 145 46 16;208 166 43 13;214 184 28 16;211 205 28 13;196 223 73 16;193 244 91 16;202 260 58 18;178 280 112 16;202 301 46 16;202 322 40 16;205 343 46 13;190 361 73 15;181 391 52 15;313 28 73 18;313 49 43 16;313 67 67 18;313 88 43 13;313 109 43 13;313 127 79 13;313 148 82 18;313 166 70 18;313 187 58 13;310 205 70 18;310 226 76 13;328 244 43 16;328 262 43 13;328 280 43 13;328 304 43 13;328 322 43 13;331 343 43 13;328 361 43 15;316 391 37 15;283 67 25 12;286 205 16 15;286 226 7 12;286 262 7 12;283 322 13 16;271 391 25 15;79 88 55 13;79 106 55 13;79 127 55 10;79 148 55 10;76 226 58 13;76 247 58 10;76 265 58 10;79 286 55 10;79 307 55 10;79 325 55 13;76 361 55 10;61 394 58 13;25 391 19 15;445 127 19 13;445 145 19 16;451 166 10 13;400 184 13 16;448 184 16 16;403 205 10 13;448 205 13 13;451 226 7 13;445 247 25 13;481 241 52 16;445 361 19 16;484 361 37 15;391 382 28 15;442 382 25 15;403 400 34 15;439 403 31 13;484 391 28 13;436 436 40 13;283 469 76 16;262 505 40 13;325 505 19 13;361 505 19 13;262 556 13 16;277 556 25 16;334 556 15 16;349 556 25 16;25 481 16 13;52 481 19 13;88 481 19 13;127 481 34 13;175 481 16 13;208 481 25 13;25 502 22 10;136 502 22 10;25 541 22 10;25 559 19 13;136 559 22 13')
  + fills('33 204 6 15;33 225 6 34;33 264 6 114;291 9 6 15;291 30 6 34;291 108 3 16;291 124 6 34;291 163 6 14;291 186 6 16;285 280 9 17;288 301 6 20;288 342 6 36;405 105 6 18;453 87 6 36;288 246 3 12');

define('drawing-view', `<style>
:host{display:block;flex:1;min-height:0;background:#000;overflow:hidden}
svg{display:block;width:100%;height:100%;shape-rendering:crispEdges;fill:none;stroke-width:3}
</style><svg role="img" aria-label="油罐总图">
<g stroke-width="1"><path stroke="#0ff" d="M208.500 80.500h555v393h-555z"/><path stroke="#fff" d="M231.500 89.500h523v374h-523z"/>
<path stroke="#f0f" d="M204 452l4.500-9 4.500 9M229 468l10 5.500-10 5"/></g>
${part(229, 87, tank)}${part(229, 282, plan)}${part(389, 102, topView)}${part(389, 262, details)}${part(579, 82, upper)}${part(579, 272, lower)}</svg>`);

/* ---------- document area and frame ---------- */
define('doc-tabs', `<style>
:host{display:flex;height:22px;background:#e5e5e5}
${RESET}.t{position:relative;display:flex;align-items:center;gap:12px;width:146px;box-sizing:border-box;padding:2px 6px 0 35px;height:22px}
.t svg{position:absolute;inset:0;z-index:-1}.t{z-index:0}
span{font-weight:700;font-size:13px;white-space:nowrap;flex:1}
</style><div class="t"><svg width="146" height="22"><path d="M3 22L21 3Q22 2.500 24 2.500H145.500V22" fill="#f8f8f8" stroke="#999"/></svg><span>油罐总图.dwg</span><button aria-label="关闭"><cad-icon name="close"></cad-icon></button></div>`);
define('layout-tabs', `<style>
:host{display:flex;height:17px;background:#e5e5e5}
${RESET}.n{width:16px;justify-content:center;align-items:center}
.n:first-of-type{margin-left:-2px}
.m{position:relative;z-index:0;height:17px;justify-content:center;align-items:center;padding-bottom:3px}
.m svg{position:absolute;left:0;top:0;z-index:-1}
.a{width:50px;font-size:14px;font-weight:700;z-index:1;color:#333;margin-left:1px}.b{width:56px;margin-left:-6px;padding-right:4px}
</style><button class="n" aria-label="首个"><cad-icon name="first"></cad-icon></button><button class="n" aria-label="上一个"><cad-icon name="prev"></cad-icon></button><button class="n" aria-label="下一个"><cad-icon name="next"></cad-icon></button><button class="n" aria-label="末个"><cad-icon name="last"></cad-icon></button>
<button class="m a"><svg width="50" height="17"><path d="M1 0L10 16.500H41L50 0" fill="#fff" stroke="#999"/></svg>模型</button>
<button class="m b"><svg width="56" height="17"><path d="M2 8L7 16.500H45L54 0" fill="none" stroke="#999"/></svg>布局1</button>`);
define('side-strip', `<style>
:host{display:flex;flex-direction:column;align-items:start;width:25px;padding-top:7px;box-sizing:border-box;background:#e5e5e5}
${RESET}button{border-left:1px solid #bbb;padding-left:3px;flex-direction:column;align-items:center;gap:1px}
span{writing-mode:vertical-rl;text-orientation:sideways;font-size:12px;line-height:14px;color:#222}
</style><button><cad-icon name="lib"></cad-icon><span>图库</span></button>`);
define('command-bar', `<style>
:host{display:flex;justify-content:space-between;align-items:center;height:23px;padding:0 14px 0 29px;background:#e5e5e5}
.c{padding-bottom:3px}
.w{font:18px/20px "Open Sans",sans-serif;color:#8c8c8c;text-shadow:0 0 1px #fff;margin-top:-16px}
</style><span class="c">命令行</span><span class="w">CSDN @biyezuopinvip</span>`);
define('cad-app', `<style>
:host{display:flex;flex-direction:column;height:100vh}
main{flex:1;display:flex;min-height:0}
.doc{flex:1;display:flex;flex-direction:column;min-width:0}
.split{width:6px;box-sizing:border-box;background:#dcdcdc;border:solid #e5e5e5;border-width:0 1px 0 2px}
.band{height:6px;margin-left:25px;background:#cbcbcb}
</style><title-bar></title-bar><ribbon-tabs></ribbon-tabs><ribbon-bar></ribbon-bar>
<main><side-strip></side-strip><property-panel></property-panel><div class="split"></div><div class="doc"><doc-tabs></doc-tabs><drawing-view></drawing-view><layout-tabs></layout-tabs></div></main>
<div class="band"></div><command-bar></command-bar>`);
</script>
</body>
</html>
